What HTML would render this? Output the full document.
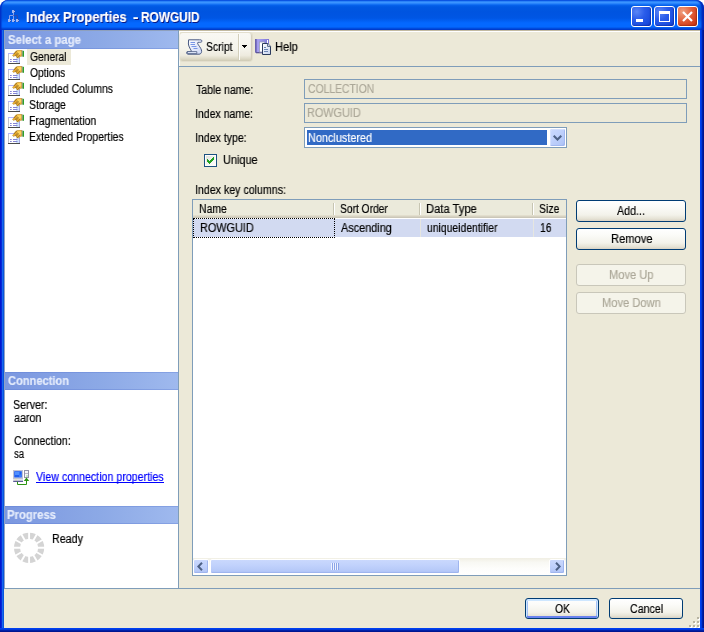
<!DOCTYPE html>
<html>
<head>
<meta charset="utf-8">
<title>Index Properties - ROWGUID</title>
<style>
html,body{margin:0;padding:0;}
body{width:704px;height:632px;position:relative;overflow:hidden;background:#fff;font-family:"Liberation Sans",sans-serif;font-size:12px;color:#000;}
.a{position:absolute;}
.t{will-change:transform;-webkit-text-stroke:0.18px;position:absolute;white-space:nowrap;transform-origin:0 0;font-family:"Liberation Sans",sans-serif;}
#win{position:absolute;left:0;top:0;width:704px;height:632px;background:#0831d9;border-radius:8px 8px 0 0;overflow:hidden;}
#titlebar{position:absolute;left:0;top:0;width:704px;height:30px;background:linear-gradient(to bottom,#0048e0 0px,#1c74f4 1px,#3c96ff 2px,#3a92ff 3px,#1a78f8 4px,#0560ea 5.5px,#0058e2 7px,#0054e0 12px,#0056e4 18px,#0260f4 21px,#0468ff 23px,#0468ff 26.5px,#0258ec 28px,#0040d0 29px,#0040d0 30px);border-radius:8px 8px 0 0;box-shadow:inset 2px 0 1px -0.5px #0030c8, inset -3px 0 1.5px -0.5px #0028b8;}
.tbtn{position:absolute;top:6px;width:21px;height:21px;box-sizing:border-box;border:1px solid #fff;border-radius:3px;background:radial-gradient(circle at 25% 25%,#5a86f6 0%,#2a5cea 40%,#1a4cde 75%,#1038c6 100%);box-shadow:inset -1px -1px 1px rgba(0,20,120,.35);}
#bclose{background:radial-gradient(circle at 25% 25%,#f0a080 0%,#e2603a 45%,#d2401c 75%,#b83010 100%);box-shadow:inset -1px -1px 1px rgba(110,20,0,.35);}
#client{position:absolute;left:4px;top:30px;width:696px;height:598px;background:#ece9d8;}
.hdr{position:absolute;left:5px;width:173px;height:18px;background:linear-gradient(to right,#7b97e0 0%,#8ca9e6 55%,#9fb9ee 100%);box-shadow:inset 0 1px 0 rgba(90,120,210,.35), inset 0 -1px 0 rgba(90,120,210,.35);}
.btn{position:absolute;box-sizing:border-box;border:1px solid #003c74;border-radius:3px;background:linear-gradient(to bottom,#ffffff 0%,#fbfbf8 30%,#f3f2ea 70%,#e6e3d6 88%,#d8d2c4 100%);}
.btn.dis{border-color:#c9c7ba;background:#f5f4ea;}
.btn.def{box-shadow:inset 0 1px 0 1px #cee7ff, inset 0 -1px 0 1px #6982ee, inset 2px 0 0 #a5c1f5, inset -2px 0 0 #a5c1f5;}
.tb{position:absolute;box-sizing:border-box;border:1px solid #7f9db9;background:#ece9d8;}
.sb{position:absolute;box-sizing:border-box;border:1px solid #fff;border-radius:2px;background:linear-gradient(to bottom,#c9d8fd 0%,#c1d2fc 40%,#b5c8f8 85%,#a9bdf3 100%);box-shadow:inset -1px -1px 0 #9fb5ee;}
</style>
</head>
<body>
<div id="win">
  <div id="titlebar">
    <!-- app icon -->
    <svg class="a" style="left:7px;top:9px" width="14" height="14" viewBox="0 0 14 14">
      <g fill="none" stroke-width="1">
        <path d="M6.5 4V6.5M2.5 10V6.5H6.5V10" stroke="#86a0ea"/>
        <path d="M6.5 6.5H10.5V10" stroke="#2a49b0"/>
      </g>
      <g fill="#a3b7f0">
        <rect x="5" y="1" width="3" height="3"/><rect x="1" y="10" width="3" height="3"/><rect x="5" y="10" width="3" height="3"/><rect x="9" y="10" width="3" height="3"/>
      </g>
      <g fill="#2d4cb4">
        <rect x="7" y="1" width="1" height="1"/><rect x="7" y="3" width="1" height="1"/>
        <rect x="3" y="12" width="1" height="1"/><rect x="7" y="12" width="1" height="1"/><rect x="11" y="12" width="1" height="1"/>
        <rect x="3" y="10" width="1" height="1"/><rect x="7" y="10" width="1" height="1"/><rect x="11" y="10" width="1" height="1"/>
      </g>
    </svg>
    <div class="tbtn" id="bmin" style="left:631px"><div class="a" style="left:4px;top:12px;width:7px;height:3px;background:#fff"></div></div>
    <div class="tbtn" id="bmax" style="left:654px"><div class="a" style="left:4px;top:4px;width:11px;height:11px;box-sizing:border-box;border:1px solid #fff;border-top-width:3px"></div></div>
    <div class="tbtn" id="bclose" style="left:677px"><svg class="a" style="left:0;top:0" width="19" height="19" viewBox="0 0 19 19"><path d="M5 5L14 14M14 5L5 14" stroke="#fff" stroke-width="2.2" stroke-linecap="butt"/></svg></div>
  </div>
  <!-- frame edges -->
  <div class="a" style="left:0;top:30px;width:4px;height:602px;background:linear-gradient(to right,#0018d0 0,#0018d0 1px,#0828d8 1px,#0828d8 2px,#1668ee 2px,#1668ee 3px,#0a55dd 3px,#0a55dd 4px)"></div>
  <div class="a" style="left:700px;top:30px;width:4px;height:602px;background:linear-gradient(to right,#0040f0 0,#0040f0 1px,#0038dc 1px,#0038dc 2px,#0020a8 2px,#0020a8 3px,#001590 3px,#001590 4px)"></div>
  <div class="a" style="left:0;top:628px;width:704px;height:4px;background:linear-gradient(to bottom,#0040f0 0,#0040f0 1px,#0038dc 1px,#0038dc 2px,#0020a8 2px,#0020a8 3px,#001590 3px,#001590 4px)"></div>
  <div id="client"></div>

  <!-- left panel -->
  <div class="a" style="left:4px;top:30px;width:174px;height:558px;background:#fff;"></div>
  <div class="a" style="left:4px;top:30px;width:1px;height:558px;background:#8fa3c4;"></div>
  <div class="a" style="left:178px;top:30px;width:1px;height:558px;background:#7f9db9;"></div>
  <div class="hdr" style="top:30px;height:19px;"></div>
  <div class="a" style="left:4px;top:30px;width:174px;height:1px;background:#8fa0bc;"></div>
  <div class="hdr" style="top:372px;"></div>
  <div class="hdr" style="top:506px;"></div>
  <div class="a" style="left:27px;top:49px;width:44px;height:16px;background:#ece9d8;"></div>
  <svg class="a" style="left:8px;top:50px" width="17" height="15" viewBox="0 0 17 15">
    <rect x="0.5" y="3.5" width="11" height="10" fill="#fff" stroke="#c4c4cc" stroke-width="1"/>
    <rect x="8" y="8" width="3" height="5" fill="#cfe4fb"/>
    <rect x="0" y="3" width="12" height="1" fill="#b4b4fa"/>
    <rect x="11" y="4" width="1" height="9" fill="#a8a8e4"/>
    <rect x="0" y="13" width="12" height="1" fill="#4a4a4a"/>
    <path d="M2 9.5H3.7M5 9.5H9.5M2 11.5H3.7M5 11.5H9.5" stroke="#8484d4" stroke-width="1"/>
    <path d="M4.6 5.6L7.6 1.2L10 0.2L14 0.3L14.4 6L12 6.5L10.3 7.9L8.8 7.6L7.6 5.4L5.6 6.4Z" fill="#f4b032" stroke="#a88428" stroke-width="0.5"/>
    <path d="M9 1.4L12.6 0.9L13.6 3L12 5L9.6 4.2Z" fill="#ffd45e"/>
    <path d="M7.5 2.5L10.5 6.5M6.5 3.5L9.5 7.5M8.5 1.5L11.5 5.5" stroke="#5a4a18" stroke-width="0.9" stroke-dasharray="1 1"/>
    <rect x="13.6" y="0.4" width="1" height="6.2" fill="#9a9a9a"/>
    <rect x="14.6" y="0.8" width="1.4" height="6" fill="#2ca02c"/>
  </svg>
  <svg class="a" style="left:8px;top:66px" width="17" height="15" viewBox="0 0 17 15">
    <rect x="0.5" y="3.5" width="11" height="10" fill="#fff" stroke="#c4c4cc" stroke-width="1"/>
    <rect x="8" y="8" width="3" height="5" fill="#cfe4fb"/>
    <rect x="0" y="3" width="12" height="1" fill="#b4b4fa"/>
    <rect x="11" y="4" width="1" height="9" fill="#a8a8e4"/>
    <rect x="0" y="13" width="12" height="1" fill="#4a4a4a"/>
    <path d="M2 9.5H3.7M5 9.5H9.5M2 11.5H3.7M5 11.5H9.5" stroke="#8484d4" stroke-width="1"/>
    <path d="M4.6 5.6L7.6 1.2L10 0.2L14 0.3L14.4 6L12 6.5L10.3 7.9L8.8 7.6L7.6 5.4L5.6 6.4Z" fill="#f4b032" stroke="#a88428" stroke-width="0.5"/>
    <path d="M9 1.4L12.6 0.9L13.6 3L12 5L9.6 4.2Z" fill="#ffd45e"/>
    <path d="M7.5 2.5L10.5 6.5M6.5 3.5L9.5 7.5M8.5 1.5L11.5 5.5" stroke="#5a4a18" stroke-width="0.9" stroke-dasharray="1 1"/>
    <rect x="13.6" y="0.4" width="1" height="6.2" fill="#9a9a9a"/>
    <rect x="14.6" y="0.8" width="1.4" height="6" fill="#2ca02c"/>
  </svg>
  <svg class="a" style="left:8px;top:82px" width="17" height="15" viewBox="0 0 17 15">
    <rect x="0.5" y="3.5" width="11" height="10" fill="#fff" stroke="#c4c4cc" stroke-width="1"/>
    <rect x="8" y="8" width="3" height="5" fill="#cfe4fb"/>
    <rect x="0" y="3" width="12" height="1" fill="#b4b4fa"/>
    <rect x="11" y="4" width="1" height="9" fill="#a8a8e4"/>
    <rect x="0" y="13" width="12" height="1" fill="#4a4a4a"/>
    <path d="M2 9.5H3.7M5 9.5H9.5M2 11.5H3.7M5 11.5H9.5" stroke="#8484d4" stroke-width="1"/>
    <path d="M4.6 5.6L7.6 1.2L10 0.2L14 0.3L14.4 6L12 6.5L10.3 7.9L8.8 7.6L7.6 5.4L5.6 6.4Z" fill="#f4b032" stroke="#a88428" stroke-width="0.5"/>
    <path d="M9 1.4L12.6 0.9L13.6 3L12 5L9.6 4.2Z" fill="#ffd45e"/>
    <path d="M7.5 2.5L10.5 6.5M6.5 3.5L9.5 7.5M8.5 1.5L11.5 5.5" stroke="#5a4a18" stroke-width="0.9" stroke-dasharray="1 1"/>
    <rect x="13.6" y="0.4" width="1" height="6.2" fill="#9a9a9a"/>
    <rect x="14.6" y="0.8" width="1.4" height="6" fill="#2ca02c"/>
  </svg>
  <svg class="a" style="left:8px;top:98px" width="17" height="15" viewBox="0 0 17 15">
    <rect x="0.5" y="3.5" width="11" height="10" fill="#fff" stroke="#c4c4cc" stroke-width="1"/>
    <rect x="8" y="8" width="3" height="5" fill="#cfe4fb"/>
    <rect x="0" y="3" width="12" height="1" fill="#b4b4fa"/>
    <rect x="11" y="4" width="1" height="9" fill="#a8a8e4"/>
    <rect x="0" y="13" width="12" height="1" fill="#4a4a4a"/>
    <path d="M2 9.5H3.7M5 9.5H9.5M2 11.5H3.7M5 11.5H9.5" stroke="#8484d4" stroke-width="1"/>
    <path d="M4.6 5.6L7.6 1.2L10 0.2L14 0.3L14.4 6L12 6.5L10.3 7.9L8.8 7.6L7.6 5.4L5.6 6.4Z" fill="#f4b032" stroke="#a88428" stroke-width="0.5"/>
    <path d="M9 1.4L12.6 0.9L13.6 3L12 5L9.6 4.2Z" fill="#ffd45e"/>
    <path d="M7.5 2.5L10.5 6.5M6.5 3.5L9.5 7.5M8.5 1.5L11.5 5.5" stroke="#5a4a18" stroke-width="0.9" stroke-dasharray="1 1"/>
    <rect x="13.6" y="0.4" width="1" height="6.2" fill="#9a9a9a"/>
    <rect x="14.6" y="0.8" width="1.4" height="6" fill="#2ca02c"/>
  </svg>
  <svg class="a" style="left:8px;top:114px" width="17" height="15" viewBox="0 0 17 15">
    <rect x="0.5" y="3.5" width="11" height="10" fill="#fff" stroke="#c4c4cc" stroke-width="1"/>
    <rect x="8" y="8" width="3" height="5" fill="#cfe4fb"/>
    <rect x="0" y="3" width="12" height="1" fill="#b4b4fa"/>
    <rect x="11" y="4" width="1" height="9" fill="#a8a8e4"/>
    <rect x="0" y="13" width="12" height="1" fill="#4a4a4a"/>
    <path d="M2 9.5H3.7M5 9.5H9.5M2 11.5H3.7M5 11.5H9.5" stroke="#8484d4" stroke-width="1"/>
    <path d="M4.6 5.6L7.6 1.2L10 0.2L14 0.3L14.4 6L12 6.5L10.3 7.9L8.8 7.6L7.6 5.4L5.6 6.4Z" fill="#f4b032" stroke="#a88428" stroke-width="0.5"/>
    <path d="M9 1.4L12.6 0.9L13.6 3L12 5L9.6 4.2Z" fill="#ffd45e"/>
    <path d="M7.5 2.5L10.5 6.5M6.5 3.5L9.5 7.5M8.5 1.5L11.5 5.5" stroke="#5a4a18" stroke-width="0.9" stroke-dasharray="1 1"/>
    <rect x="13.6" y="0.4" width="1" height="6.2" fill="#9a9a9a"/>
    <rect x="14.6" y="0.8" width="1.4" height="6" fill="#2ca02c"/>
  </svg>
  <svg class="a" style="left:8px;top:130px" width="17" height="15" viewBox="0 0 17 15">
    <rect x="0.5" y="3.5" width="11" height="10" fill="#fff" stroke="#c4c4cc" stroke-width="1"/>
    <rect x="8" y="8" width="3" height="5" fill="#cfe4fb"/>
    <rect x="0" y="3" width="12" height="1" fill="#b4b4fa"/>
    <rect x="11" y="4" width="1" height="9" fill="#a8a8e4"/>
    <rect x="0" y="13" width="12" height="1" fill="#4a4a4a"/>
    <path d="M2 9.5H3.7M5 9.5H9.5M2 11.5H3.7M5 11.5H9.5" stroke="#8484d4" stroke-width="1"/>
    <path d="M4.6 5.6L7.6 1.2L10 0.2L14 0.3L14.4 6L12 6.5L10.3 7.9L8.8 7.6L7.6 5.4L5.6 6.4Z" fill="#f4b032" stroke="#a88428" stroke-width="0.5"/>
    <path d="M9 1.4L12.6 0.9L13.6 3L12 5L9.6 4.2Z" fill="#ffd45e"/>
    <path d="M7.5 2.5L10.5 6.5M6.5 3.5L9.5 7.5M8.5 1.5L11.5 5.5" stroke="#5a4a18" stroke-width="0.9" stroke-dasharray="1 1"/>
    <rect x="13.6" y="0.4" width="1" height="6.2" fill="#9a9a9a"/>
    <rect x="14.6" y="0.8" width="1.4" height="6" fill="#2ca02c"/>
  </svg>

  <!-- connection icon -->
  <svg class="a" style="left:12px;top:469px" width="19" height="17" viewBox="0 0 19 17">
    <rect x="1.5" y="1.5" width="9" height="8" fill="#d4d6e2" stroke="#c0c2d2" stroke-width="1"/>
    <rect x="2.2" y="2.2" width="7.6" height="6.3" fill="#1f5ff0"/>
    <rect x="3" y="3" width="4.5" height="3" fill="#4f8fff"/>
    <rect x="7" y="5.5" width="2.5" height="2.5" fill="#3c7cf8"/>
    <rect x="1.2" y="10" width="9.8" height="1.8" fill="#dcdfee"/>
    <rect x="3" y="10.4" width="2" height="1" fill="#f4ec9a"/>
    <rect x="1.2" y="11.8" width="9.8" height="1" fill="#34347c"/>
    <rect x="12.5" y="1.5" width="4" height="7" fill="#f6f6fa" stroke="#9494a8" stroke-width="1"/>
    <rect x="13" y="4" width="3" height="1" fill="#b8b8c8"/>
    <rect x="14.5" y="6.5" width="1" height="1" fill="#30b030"/>
    <path d="M5.5 12.8V15.5H14.5V10" fill="none" stroke="#2c9412" stroke-width="1"/>
    <path d="M14.5 8.4L11.8 11.9H17.2Z" fill="#2c9412"/>
  </svg>
  <div class="a" style="left:36px;top:482px;width:128px;height:1px;background:#0000ff;"></div>

  <!-- spinner -->
  <svg class="a" style="left:13px;top:532px" width="32" height="32" viewBox="0 0 32 32">
    <circle cx="16.1" cy="15.8" r="12.1" fill="none" stroke="#d4d4d4" stroke-width="6"/><g stroke="#fff" stroke-width="1.9"><path d="M33.10 15.80L-0.90 15.80"/><path d="M30.82 24.30L1.38 7.30"/><path d="M24.60 30.52L7.60 1.08"/><path d="M16.10 32.80L16.10 -1.20"/><path d="M7.60 30.52L24.60 1.08"/><path d="M1.38 24.30L30.82 7.30"/></g>
  </svg>

  <!-- toolbar -->
  <div class="a" style="left:179px;top:30px;width:521px;height:1px;background:#c2baa2;"></div>
  <div class="a" style="left:179px;top:31px;width:521px;height:1px;background:#ffffff;"></div>
  <div class="a" style="left:179px;top:31px;width:1px;height:35px;background:#fbfaf6;"></div>
  <div class="a" style="left:180px;top:33px;width:72px;height:28px;border-radius:3px;background:linear-gradient(to bottom,#f9f8f3 0%,#f5f4ec 55%,#eeebdf 80%,#ddd9c6 92%,#cfcab4 100%);box-shadow:inset -2px 0 1px -1px #d2cdb8, 0 0 0 1px rgba(205,200,180,.3);"></div>
  <div class="a" style="left:238px;top:34px;width:1px;height:26px;background:#d3cfbc;"></div>
  <div class="a" style="left:239px;top:34px;width:1px;height:26px;background:#fdfdfb;"></div>
  <svg class="a" style="left:242px;top:45px" width="5" height="3" viewBox="0 0 5 3"><path d="M0 0H5V1H4V2H3V3H2V2H1V1H0Z" fill="#000"/></svg>
  <!-- script icon -->
  <svg class="a" style="left:186px;top:39px" width="17" height="16" viewBox="0 0 17 16">
    <defs><linearGradient id="sg" x1="0" y1="0" x2="1" y2="1"><stop offset="0" stop-color="#ffffff"/><stop offset="1" stop-color="#cdd8f7"/></linearGradient></defs>
    <path d="M2.6 0.8H13.5C15.6 0.6 16.2 1.6 15.8 2.6C15.4 3.4 14 3.4 12 3.3C11.2 3.6 11.6 4.8 12.6 6.2C14 8.2 15.8 10.4 15.6 12.6C15.5 14.2 14.4 15.2 13 15.2H2C0.4 15.2 0 12.6 1.8 12.5H5.6C4.8 10.6 2.6 7.6 2.4 5Z" fill="url(#sg)" stroke="#4a5a82" stroke-width="1" stroke-linejoin="round"/>
    <path d="M1.2 12.6H10.8V14.6H1.6Z" fill="#e4ebfc" stroke="#4a5a82" stroke-width="0.8"/>
    <path d="M4.5 3.5H9M4.5 5.5H9M5.5 7.5H10.5M7.5 9.5H11.5" stroke="#7896e6" stroke-width="1"/>
  </svg>
  <!-- help icon -->
  <svg class="a" style="left:255px;top:39px" width="17" height="17" viewBox="0 0 17 17">
    <defs>
      <linearGradient id="bg1" x1="0" y1="0" x2="1" y2="0"><stop offset="0" stop-color="#6f66b8"/><stop offset="0.2" stop-color="#a9a2f2"/><stop offset="1" stop-color="#7d76d4"/></linearGradient>
      <linearGradient id="pg1" x1="0" y1="0" x2="1" y2="1"><stop offset="0" stop-color="#ffffff"/><stop offset="1" stop-color="#c4d2ee"/></linearGradient>
    </defs>
    <rect x="0" y="0" width="14" height="13.5" fill="url(#bg1)"/>
    <rect x="0" y="0" width="1.5" height="13.5" fill="#6a62b0"/>
    <rect x="1" y="13" width="12" height="1.3" fill="#5e5898"/>
    <rect x="12" y="1" width="1" height="4" fill="#fff"/>
    <rect x="4.5" y="3" width="5" height="10" fill="#fff" stroke="#9aa0b8" stroke-width="0.8"/>
    <path d="M7.5 4.5H12.8L15.5 7.3V15.5H7.5Z" fill="url(#pg1)" stroke="#2c3c5e" stroke-width="1" stroke-linejoin="round"/>
    <path d="M12.6 4.6V7.4H15.4" fill="#e8eefc" stroke="#2c3c5e" stroke-width="0.8"/>
    <path d="M9 8.5H11M9 10.5H13M9 12.5H13" stroke="#6e86b4" stroke-width="1"/>
  </svg>
  <div class="a" style="left:179px;top:66px;width:521px;height:1px;background:#7f9db9;"></div>
  <div class="a" style="left:4px;top:588px;width:696px;height:1px;background:#7f9db9;"></div>

  <!-- form -->
  <div class="tb" style="left:304px;top:79px;width:383px;height:20px;"></div>
  <div class="tb" style="left:304px;top:103px;width:383px;height:20px;"></div>
  <div class="tb" style="left:304px;top:127px;width:263px;height:21px;background:#fff;"></div>
  <div class="a" style="left:307px;top:130px;width:240px;height:15px;background:#316ac5;"></div>
  <div class="a" style="left:550px;top:129px;width:15px;height:17px;border-radius:2px;background:linear-gradient(to bottom right,#cad9fd 0%,#c1d2fc 40%,#b3c7f8 80%,#a9bef4 100%);box-shadow:inset -1px -1px 0 #a2b8f0, inset 1px 1px 0 #d4e0fe;"></div>
  <svg class="a" style="left:553px;top:135px" width="9" height="6" viewBox="0 0 9 6"><path d="M0.7 0.7L4.5 4.5L8.3 0.7" fill="none" stroke="#4d6185" stroke-width="2"/></svg>
  <!-- checkbox -->
  <div class="a" style="left:204px;top:154px;width:13px;height:13px;box-sizing:border-box;border:1px solid #1c5180;background:linear-gradient(135deg,#dcdcd7 0%,#f3f3ef 50%,#ffffff 100%);box-shadow:inset 0 0 0 1px #fdfdfb;"></div>
  <svg class="a" style="left:207px;top:157px" width="7" height="7" viewBox="0 0 7 7"><path d="M0 2H1V3H2V4H3V3H4V2H5V1H6V0H7V3H6V4H5V5H4V6H3V7H2V6H1V5H0Z" fill="#21a121"/></svg>

  <!-- list view -->
  <div class="a" style="left:192px;top:199px;width:375px;height:377px;box-sizing:border-box;border:1px solid #7f9db9;background:#fff;"></div>
  <div class="a" style="left:193px;top:200px;width:373px;height:18px;background:linear-gradient(to bottom,#ebeadb 0,#ebeadb 15px,#e2decd 15px,#e2decd 16px,#d6d2c2 16px,#d6d2c2 17px,#cbc7b8 17px,#cbc7b8 18px);"></div>
  <div class="a" style="left:333px;top:203px;width:1px;height:12px;background:#c7c5b2;"></div><div class="a" style="left:334px;top:203px;width:1px;height:12px;background:#fff;"></div>
  <div class="a" style="left:419px;top:203px;width:1px;height:12px;background:#c7c5b2;"></div><div class="a" style="left:420px;top:203px;width:1px;height:12px;background:#fff;"></div>
  <div class="a" style="left:532px;top:203px;width:1px;height:12px;background:#c7c5b2;"></div><div class="a" style="left:533px;top:203px;width:1px;height:12px;background:#fff;"></div>
  <div class="a" style="left:193px;top:219px;width:373px;height:18px;background:#d2daf1;"></div>
  <div class="a" style="left:420px;top:219px;width:1px;height:18px;background:#e6e6e0;"></div>
  <div class="a" style="left:533px;top:219px;width:1px;height:18px;background:#e6e6e0;"></div>
  <div class="a" style="left:193px;top:218px;width:142px;height:20px;box-sizing:border-box;border:1px dotted #000;"></div>
  <!-- scrollbar -->
  <div class="a" style="left:193px;top:558px;width:373px;height:17px;background:linear-gradient(to bottom,#f1efe4 0%,#f8f8f3 25%,#fdfdfb 60%,#ffffff 100%);"></div>
  <div class="sb" style="left:193px;top:559px;width:16px;height:15px;"></div>
  <svg class="a" style="left:197px;top:562px" width="6" height="9" viewBox="0 0 6 9"><path d="M5 0.7L1.3 4.5L5 8.3" fill="none" stroke="#4d6185" stroke-width="2"/></svg>
  <div class="sb" style="left:549px;top:559px;width:16px;height:15px;"></div>
  <svg class="a" style="left:555px;top:562px" width="6" height="9" viewBox="0 0 6 9"><path d="M1 0.7L4.7 4.5L1 8.3" fill="none" stroke="#4d6185" stroke-width="2"/></svg>
  <div class="sb" style="left:210px;top:559px;width:250px;height:15px;"></div>
  <div class="a" style="left:331px;top:563px;width:8px;height:7px;background:repeating-linear-gradient(to right,#eef3ff 0,#eef3ff 1px,#8ca5e8 1px,#8ca5e8 2px);"></div>

  <!-- buttons -->
  <div class="btn" style="left:576px;top:200px;width:110px;height:22px;"></div>
  <div class="btn" style="left:576px;top:228px;width:110px;height:22px;"></div>
  <div class="btn dis" style="left:576px;top:264px;width:110px;height:22px;"></div>
  <div class="btn dis" style="left:576px;top:292px;width:110px;height:22px;"></div>
  <div class="btn def" style="left:525px;top:598px;width:74px;height:21px;"></div>
  <div class="btn" style="left:609px;top:598px;width:74px;height:21px;"></div>
  <!-- grip -->
  <svg class="a" style="left:688px;top:616px" width="12" height="12" viewBox="0 0 12 12">
    <g fill="#fff"><rect x="10" y="2" width="2" height="2"/><rect x="6" y="6" width="2" height="2"/><rect x="10" y="6" width="2" height="2"/><rect x="2" y="10" width="2" height="2"/><rect x="6" y="10" width="2" height="2"/><rect x="10" y="10" width="2" height="2"/></g>
    <g fill="#b8b4a2"><rect x="9" y="1" width="2" height="2"/><rect x="5" y="5" width="2" height="2"/><rect x="9" y="5" width="2" height="2"/><rect x="1" y="9" width="2" height="2"/><rect x="5" y="9" width="2" height="2"/><rect x="9" y="9" width="2" height="2"/></g>
  </svg>

  <div class="t" style="left:26.07px;top:8px;font-size:14px;line-height:18px;color:#fff;transform:scaleX(0.9257);text-shadow:1px 1px 0 #0a1883;font-weight:bold;">Index</div>
<div class="t" style="left:63.28px;top:8px;font-size:14px;line-height:18px;color:#fff;transform:scaleX(0.9176);text-shadow:1px 1px 0 #0a1883;font-weight:bold;">Properties</div>
<div class="t" style="left:132.80px;top:8px;font-size:14px;line-height:18px;color:#fff;transform:scaleX(1.1750);text-shadow:1px 1px 0 #0a1883;font-weight:bold;">-</div>
<div class="t" style="left:140.55px;top:8px;font-size:14px;line-height:18px;color:#fff;transform:scaleX(0.8471);text-shadow:1px 1px 0 #0a1883;font-weight:bold;">ROWGUID</div>
<div class="t" style="left:7.75px;top:32px;font-size:12px;line-height:16px;color:#e4ebfb;transform:scaleX(0.9513);font-weight:bold;">Select a page</div>
<div class="t" style="left:8.00px;top:373px;font-size:12px;line-height:16px;color:#e4ebfb;transform:scaleX(0.9242);font-weight:bold;">Connection</div>
<div class="t" style="left:7.06px;top:507px;font-size:12px;line-height:16px;color:#e4ebfb;transform:scaleX(0.9412);font-weight:bold;">Progress</div>
<div class="t" style="left:30.00px;top:49px;font-size:12px;line-height:16px;color:#000;transform:scaleX(0.8571);">General</div>
<div class="t" style="left:30.00px;top:65px;font-size:12px;line-height:16px;color:#000;transform:scaleX(0.8537);">Options</div>
<div class="t" style="left:29.13px;top:81px;font-size:12px;line-height:16px;color:#000;transform:scaleX(0.8737);">Included Columns</div>
<div class="t" style="left:29.12px;top:97px;font-size:12px;line-height:16px;color:#000;transform:scaleX(0.8780);">Storage</div>
<div class="t" style="left:29.13px;top:113px;font-size:12px;line-height:16px;color:#000;transform:scaleX(0.8684);">Fragmentation</div>
<div class="t" style="left:29.13px;top:129px;font-size:12px;line-height:16px;color:#000;transform:scaleX(0.8704);">Extended Properties</div>
<div class="t" style="left:12.61px;top:397px;font-size:12px;line-height:16px;color:#000;transform:scaleX(0.8919);">Server:</div>
<div class="t" style="left:13.70px;top:410px;font-size:12px;line-height:16px;color:#000;transform:scaleX(0.8933);">aaron</div>
<div class="t" style="left:13.50px;top:433px;font-size:12px;line-height:16px;color:#000;transform:scaleX(0.8857);">Connection:</div>
<div class="t" style="left:13.70px;top:446px;font-size:12px;line-height:16px;color:#000;transform:scaleX(0.7923);">sa</div>
<div class="t" style="left:36.20px;top:469px;font-size:12px;line-height:16px;color:#0000ff;transform:scaleX(0.8875);">View connection properties</div>
<div class="t" style="left:51.81px;top:531px;font-size:12px;line-height:16px;color:#000;transform:scaleX(0.8912);">Ready</div>
<div class="t" style="left:206.13px;top:39px;font-size:12px;line-height:16px;color:#000;transform:scaleX(0.8667);">Script</div>
<div class="t" style="left:275.08px;top:39px;font-size:12px;line-height:16px;color:#000;transform:scaleX(0.9239);">Help</div>
<div class="t" style="left:196.00px;top:82px;font-size:12px;line-height:16px;color:#000;transform:scaleX(0.8769);">Table name:</div>
<div class="t" style="left:195.12px;top:106px;font-size:12px;line-height:16px;color:#000;transform:scaleX(0.8781);">Index name:</div>
<div class="t" style="left:195.12px;top:130px;font-size:12px;line-height:16px;color:#000;transform:scaleX(0.8807);">Index type:</div>
<div class="t" style="left:222.69px;top:152px;font-size:12px;line-height:16px;color:#000;transform:scaleX(0.9108);">Unique</div>
<div class="t" style="left:195.11px;top:182px;font-size:12px;line-height:16px;color:#000;transform:scaleX(0.8851);">Index key columns:</div>
<div class="t" style="left:307.70px;top:81px;font-size:12px;line-height:16px;color:#aca899;transform:scaleX(0.8632);">COLLECTION</div>
<div class="t" style="left:306.79px;top:105px;font-size:12px;line-height:16px;color:#aca899;transform:scaleX(0.9052);">ROWGUID</div>
<div class="t" style="left:307.69px;top:130px;font-size:12px;line-height:16px;color:#fff;transform:scaleX(0.9072);">Nonclustered</div>
<div class="t" style="left:199.13px;top:201px;font-size:12px;line-height:16px;color:#000;transform:scaleX(0.8710);">Name</div>
<div class="t" style="left:340.15px;top:201px;font-size:12px;line-height:16px;color:#000;transform:scaleX(0.8545);">Sort Order</div>
<div class="t" style="left:426.07px;top:201px;font-size:12px;line-height:16px;color:#000;transform:scaleX(0.9321);">Data Type</div>
<div class="t" style="left:539.13px;top:201px;font-size:12px;line-height:16px;color:#000;transform:scaleX(0.8727);">Size</div>
<div class="t" style="left:199.89px;top:220px;font-size:12px;line-height:16px;color:#000;transform:scaleX(0.9052);">ROWGUID</div>
<div class="t" style="left:341.20px;top:220px;font-size:12px;line-height:16px;color:#000;transform:scaleX(0.9073);">Ascending</div>
<div class="t" style="left:427.13px;top:220px;font-size:12px;line-height:16px;color:#000;transform:scaleX(0.8654);">uniqueidentifier</div>
<div class="t" style="left:540.14px;top:220px;font-size:12px;line-height:16px;color:#000;transform:scaleX(0.8583);">16</div>
<div class="t" style="left:616.70px;top:203px;font-size:12px;line-height:16px;color:#000;transform:scaleX(0.8903);">Add...</div>
<div class="t" style="left:610.57px;top:231px;font-size:12px;line-height:16px;color:#000;transform:scaleX(0.9302);">Remove</div>
<div class="t" style="left:608.57px;top:267px;font-size:12px;line-height:16px;color:#aca899;transform:scaleX(0.9255);">Move Up</div>
<div class="t" style="left:601.87px;top:295px;font-size:12px;line-height:16px;color:#aca899;transform:scaleX(0.9274);">Move Down</div>
<div class="t" style="left:554.60px;top:601px;font-size:12px;line-height:16px;color:#000;transform:scaleX(0.8647);">OK</div>
<div class="t" style="left:629.50px;top:601px;font-size:12px;line-height:16px;color:#000;transform:scaleX(0.8865);">Cancel</div>
</div>
</body>
</html>
